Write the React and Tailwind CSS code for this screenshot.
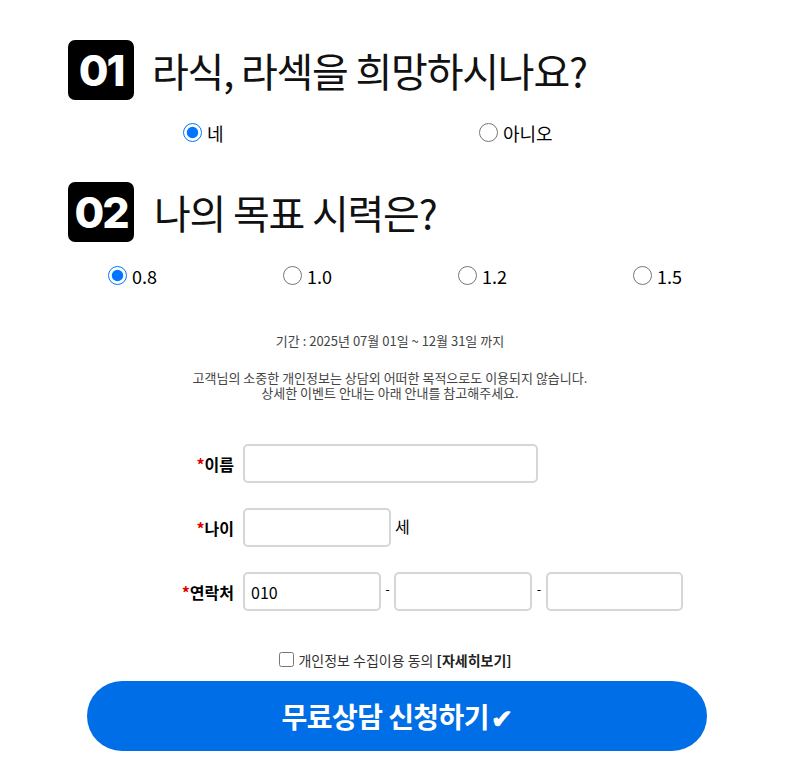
import React from "react";

const KR = { fontFamily: '"Noto Sans CJK KR", "Noto Sans", sans-serif' };

function Badge({ n }) {
  return (
    <div
      className="flex h-[60px] w-[66px] items-center justify-center rounded-[7px] bg-black text-[43px] font-extrabold leading-none tracking-[-0.05em] text-white"
      style={{ fontFamily: 'Inter, "Noto Sans", sans-serif' }}
    >
      {n}
    </div>
  );
}

function Radio({ label, checked, name }) {
  return (
    <label className="flex items-center gap-[5px] text-[18px] leading-none text-black">
      <input
        type="radio"
        name={name}
        defaultChecked={checked}
        className="m-0 h-[19px] w-[19px]"
      />
      <span>{label}</span>
    </label>
  );
}

function Field({ label, children }) {
  return (
    <div className="flex items-center">
      <div className="w-[234px] text-right text-[16px] font-bold text-black">
        <span className="text-[#e00000]">*</span>
        {label}
      </div>
      <div className="ml-[9px] flex items-center">{children}</div>
    </div>
  );
}

const inputCls =
  "h-[39px] rounded-[5px] border-2 border-[#d6d6d6] bg-white px-[6px] text-[16px] text-black outline-none";

export default function App() {
  return (
    <div className="min-h-[773px] w-[791px] bg-white" style={KR}>
      {/* Q1 */}
      <div className="flex items-center pl-[68px] pt-[40px]">
        <Badge n="01" />
        <div className="ml-[18px] text-[40px] font-normal leading-none tracking-[-0.03em] text-[#111]">
          라식, 라섹을 희망하시나요?
        </div>
      </div>
      <div className="ml-[183px] mt-[23px] grid grid-cols-[296px_auto]">
        <Radio name="q1" label="네" checked />
        <Radio name="q1" label="아니오" />
      </div>

      {/* Q2 */}
      <div className="mt-[40px] flex items-center pl-[68px]">
        <Badge n="02" />
        <div className="ml-[20px] text-[40px] font-normal leading-none tracking-[-0.03em] text-[#111]">
          나의 목표 시력은?
        </div>
      </div>
      <div className="ml-[45px] mt-[24px] grid w-[700px] grid-cols-4">
        {[
          ["0.8", true],
          ["1.0", false],
          ["1.2", false],
          ["1.5", false],
        ].map(([l, c]) => (
          <div key={l} className="flex justify-center">
            <Radio name="q2" label={l} checked={c} />
          </div>
        ))}
      </div>

      {/* Info */}
      <div className="pr-[11px]">
        <div className="mt-[47px] text-center text-[13px] leading-[18px] text-[#444]">
          기간 : 2025년 07월 01일 ~ 12월 31일 까지
        </div>
        <div className="mt-[20px] text-center text-[13px] leading-[15px] text-[#444]">
          <div>고객님의 소중한 개인정보는 상담외 어떠한 목적으로도 이용되지 않습니다.</div>
          <div>상세한 이벤트 안내는 아래 안내를 참고해주세요.</div>
        </div>
      </div>

      {/* Form */}
      <div className="mt-[44px] flex flex-col gap-[25px]">
        <Field label="이름">
          <input className={inputCls + " w-[295px]"} />
        </Field>
        <Field label="나이">
          <input className={inputCls + " w-[148px]"} />
          <span className="ml-[4px] -mt-[4px] text-[16px] text-black">세</span>
        </Field>
        <Field label="연락처">
          <input className={inputCls + " w-[138px]"} defaultValue="010" />
          <span className="w-[13px] text-center text-[13px] -mt-[6px] text-black">-</span>
          <input className={inputCls + " w-[138px]"} />
          <span className="w-[14px] text-center text-[13px] -mt-[6px] text-black">-</span>
          <input className={inputCls + " w-[137px]"} />
        </Field>
      </div>

      {/* Agree */}
      <div className="mt-[41px] flex items-center justify-center text-[14px] leading-none text-[#333]">
        <input type="checkbox" className="m-0 h-[15px] w-[15px]" />
        <span className="ml-[4px]">
          개인정보 수집이용 동의 <b className="font-bold text-[#222]">[자세히보기]</b>
        </span>
      </div>

      <button className="ml-[87px] mt-[14px] flex h-[70px] w-[620px] items-center justify-center rounded-full bg-[#006ee6] text-[28px] font-bold tracking-[-0.02em] text-white">
        무료상담 신청하기<span className="ml-[2px] text-[26px]">✔</span>
      </button>
    </div>
  );
}
